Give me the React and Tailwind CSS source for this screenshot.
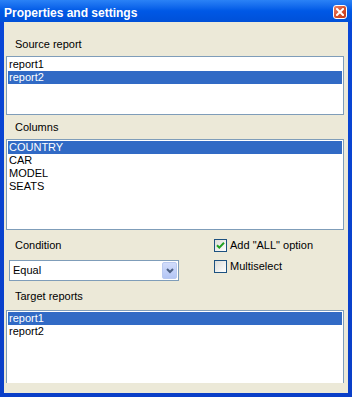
import React from "react";

const font = { fontFamily: '"Liberation Sans", Arial, sans-serif' };

function ListBox({ items, selected, className }) {
  return (
    <div className={"ml-[2px] mr-[4px] border border-[#7f9db9] bg-white p-[1px] overflow-hidden " + className}>
      {items.map((it, i) => (
        <div
          key={it}
          className={
            "h-[13px] leading-[13px] text-[11px] pl-[1px] whitespace-nowrap " +
            (i === selected ? "bg-[#316ac5] text-white" : "text-black")
          }
        >
          {it}
        </div>
      ))}
    </div>
  );
}

function Label({ children, className = "" }) {
  return <div className={"h-[13px] leading-[13px] text-[11px] text-black pl-[11px] " + className}>{children}</div>;
}

function Checkbox({ checked, label, className = "" }) {
  return (
    <div className={"flex items-center h-[13px] " + className}>
      <div className="w-[13px] h-[13px] border border-[#1c5180] bg-gradient-to-br from-[#dcdcd7] to-white flex items-center justify-center">
        {checked && (
          <svg width="9" height="9" viewBox="0 0 9 9">
            <path d="M1 4.2 L3.3 6.6 L8 1.8" fill="none" stroke="#21a121" strokeWidth="2" />
          </svg>
        )}
      </div>
      <span className="ml-[3px] text-[11px] leading-[13px] text-black whitespace-nowrap">{label}</span>
    </div>
  );
}

export default function App() {
  return (
    <div
      className="w-[352px] h-[397px] flex flex-col bg-gradient-to-b from-[#0847d8] to-[#0a3fc8] overflow-hidden"
      style={font}
    >
      <div className="h-[22px] shrink-0 flex items-start justify-between bg-gradient-to-b from-[#2a82f6] via-[#0058e6] to-[#0050d8] pl-[4px] pr-[5px]">
        <span className="pt-[6px] leading-[14px] text-[12px] font-bold text-white whitespace-nowrap">
          Properties and settings
        </span>
        <div className="mt-[5px] w-[14px] h-[14px] rounded-[3px] border border-white bg-gradient-to-br from-[#e9826a] via-[#d7512d] to-[#c0391a] flex items-center justify-center">
          <svg width="8" height="8" viewBox="0 0 8 8">
            <path d="M1 1 L7 7 M7 1 L1 7" stroke="white" strokeWidth="2" strokeLinecap="square" />
          </svg>
        </div>
      </div>
      <div className="flex-1 mx-[4px] mb-[4px] bg-[#ece9d8] flex flex-col pt-[16px] overflow-hidden">
        <Label>Source report</Label>
        <ListBox items={["report1", "report2"]} selected={1} className="mt-[5px] h-[59px]" />
        <Label className="mt-[6px]">Columns</Label>
        <ListBox items={["COUNTRY", "CAR", "MODEL", "SEATS"]} selected={0} className="mt-[5px] h-[91px]" />
        <div className="flex mt-[9px]">
          <div className="flex flex-col w-[210px]">
            <Label>Condition</Label>
            <div className="mt-[8px] ml-[5px] w-[170px] h-[21px] border border-[#7f9db9] bg-white flex items-center justify-between p-[1px]">
              <span className="pl-[2px] text-[11px] leading-[13px] text-black">Equal</span>
              <div className="w-[15px] h-[17px] rounded-[2px] border border-[#b9c9f0] bg-gradient-to-b from-[#d2ddfb] to-[#b4c6f5] flex items-center justify-center">
                <svg width="8" height="6" viewBox="0 0 8 6">
                  <path d="M1 1 L4 4 L7 1" fill="none" stroke="#4d6185" strokeWidth="2" />
                </svg>
              </div>
            </div>
          </div>
          <div className="flex flex-col">
            <Checkbox checked label={'Add "ALL" option'} />
            <Checkbox label="Multiselect" className="mt-[8px]" />
          </div>
        </div>
        <Label className="mt-[9px]">Target reports</Label>
        <ListBox items={["report1", "report2"]} selected={0} className="mt-[7px] h-[73px] border-b-0" />
      </div>
    </div>
  );
}
